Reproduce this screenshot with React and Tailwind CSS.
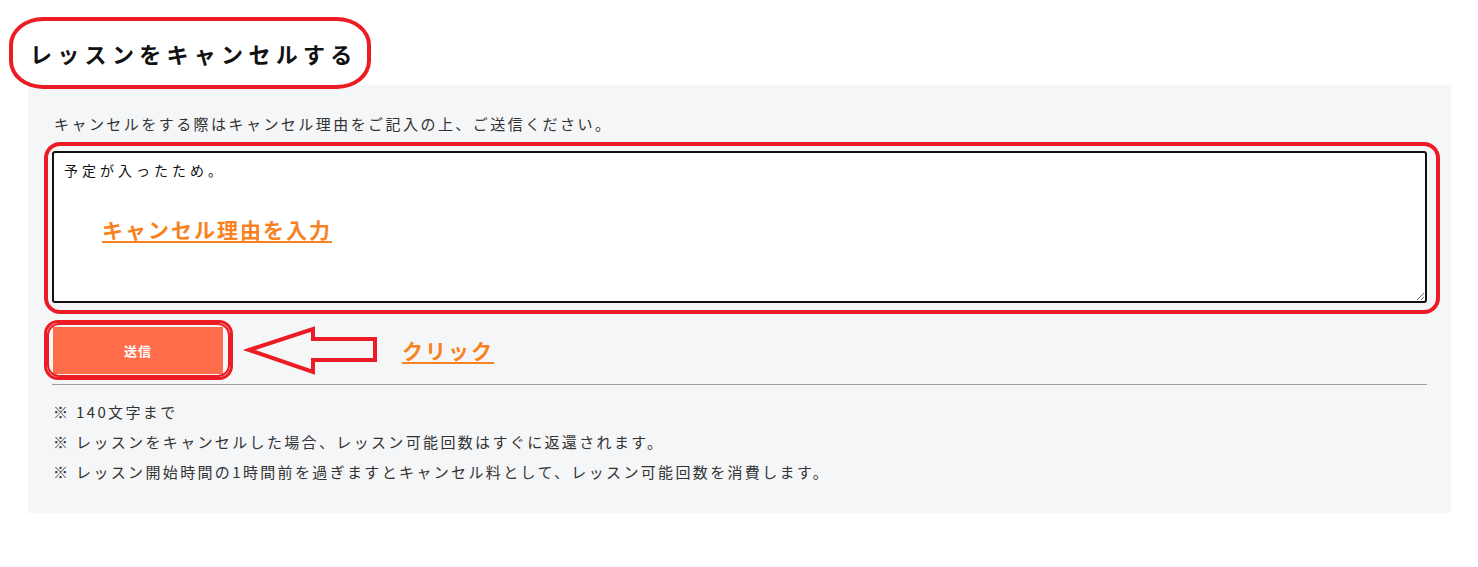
import React from "react";

export default function App() {
  const font = { fontFamily: '"Noto Sans CJK JP", "Noto Sans", sans-serif' };
  return (
    <div className="relative w-[1478px] h-[567px] bg-white overflow-hidden" style={font}>
      <div className="flex flex-col px-[28px] pt-[36px]">
        <h2 className="pl-[2px] text-[22px] leading-[34px] font-bold tracking-[5.3px] text-[#111] mb-[15px]">
          レッスンをキャンセルする
        </h2>
        <div className="flex flex-col w-[1423px] bg-[#f5f6f8] px-6 pt-[27px] pb-[26px]">
          <p className="pl-[2px] text-[15px] leading-[24px] tracking-[2.45px] text-[#333]">
            キャンセルをする際はキャンセル理由をご記入の上、ご送信ください。
          </p>
          <textarea
            className="mt-[15px] block w-full h-[152px] bg-white border-2 border-[#111] rounded-[3px] px-[10px] py-[6px] text-[14px] leading-[22px] tracking-[4px] text-[#111] outline-none"
            style={font}
            defaultValue="予定が入ったため。"
          />
          <button className="mt-[24px] ml-[1px] w-[170px] h-[47px] bg-[#ff6d4b] text-white text-[13px] font-bold tracking-[1px]">
            送信
          </button>
          <div className="mt-[10px] h-px bg-[#a0a0a0]" />
          <ul className="flex flex-col mt-[12px] pl-[1px] text-[15px] leading-[30px] text-[#333] tracking-[2.35px]">
            <li>※ 140文字まで</li>
            <li>※ レッスンをキャンセルした場合、レッスン可能回数はすぐに返還されます。</li>
            <li>※ レッスン開始時間の1時間前を過ぎますとキャンセル料として、レッスン可能回数を消費します。</li>
          </ul>
        </div>
      </div>

      {/* annotations */}
      <div className="absolute left-[9px] top-[17px] w-[362px] h-[72px] border-4 border-[#ec1c24] rounded-[34px/28px]" />
      <div className="absolute left-[44px] top-[142px] w-[1396px] h-[172px] border-4 border-[#ec1c24] rounded-[16px]" />
      <div className="absolute left-[44px] top-[320px] w-[189px] h-[60px] border-[3px] border-[#ec1c24] rounded-[14px]" />
      <div className="absolute left-[47px] top-[323px] w-[183px] h-[54px] border-2 border-[#ec1c24] rounded-[12px]" />
      <svg className="absolute left-0 top-0 pointer-events-none" width="1478" height="567">
        <polygon
          points="249,350 313,329 313,339 375,339 375,360 313,360 313,372"
          fill="none"
          stroke="#ec1c24"
          strokeWidth="4"
          strokeLinejoin="miter"
        />
      </svg>
      <div className="absolute left-[102px] top-[214px] text-[21px] leading-[30px] font-bold tracking-[2px] text-[#f7821f] underline underline-offset-[3px] decoration-2">
        キャンセル理由を入力
      </div>
      <div className="absolute left-[402px] top-[335px] text-[21px] leading-[30px] font-bold tracking-[2px] text-[#f7821f] underline underline-offset-[3px] decoration-2">
        クリック
      </div>
    </div>
  );
}
